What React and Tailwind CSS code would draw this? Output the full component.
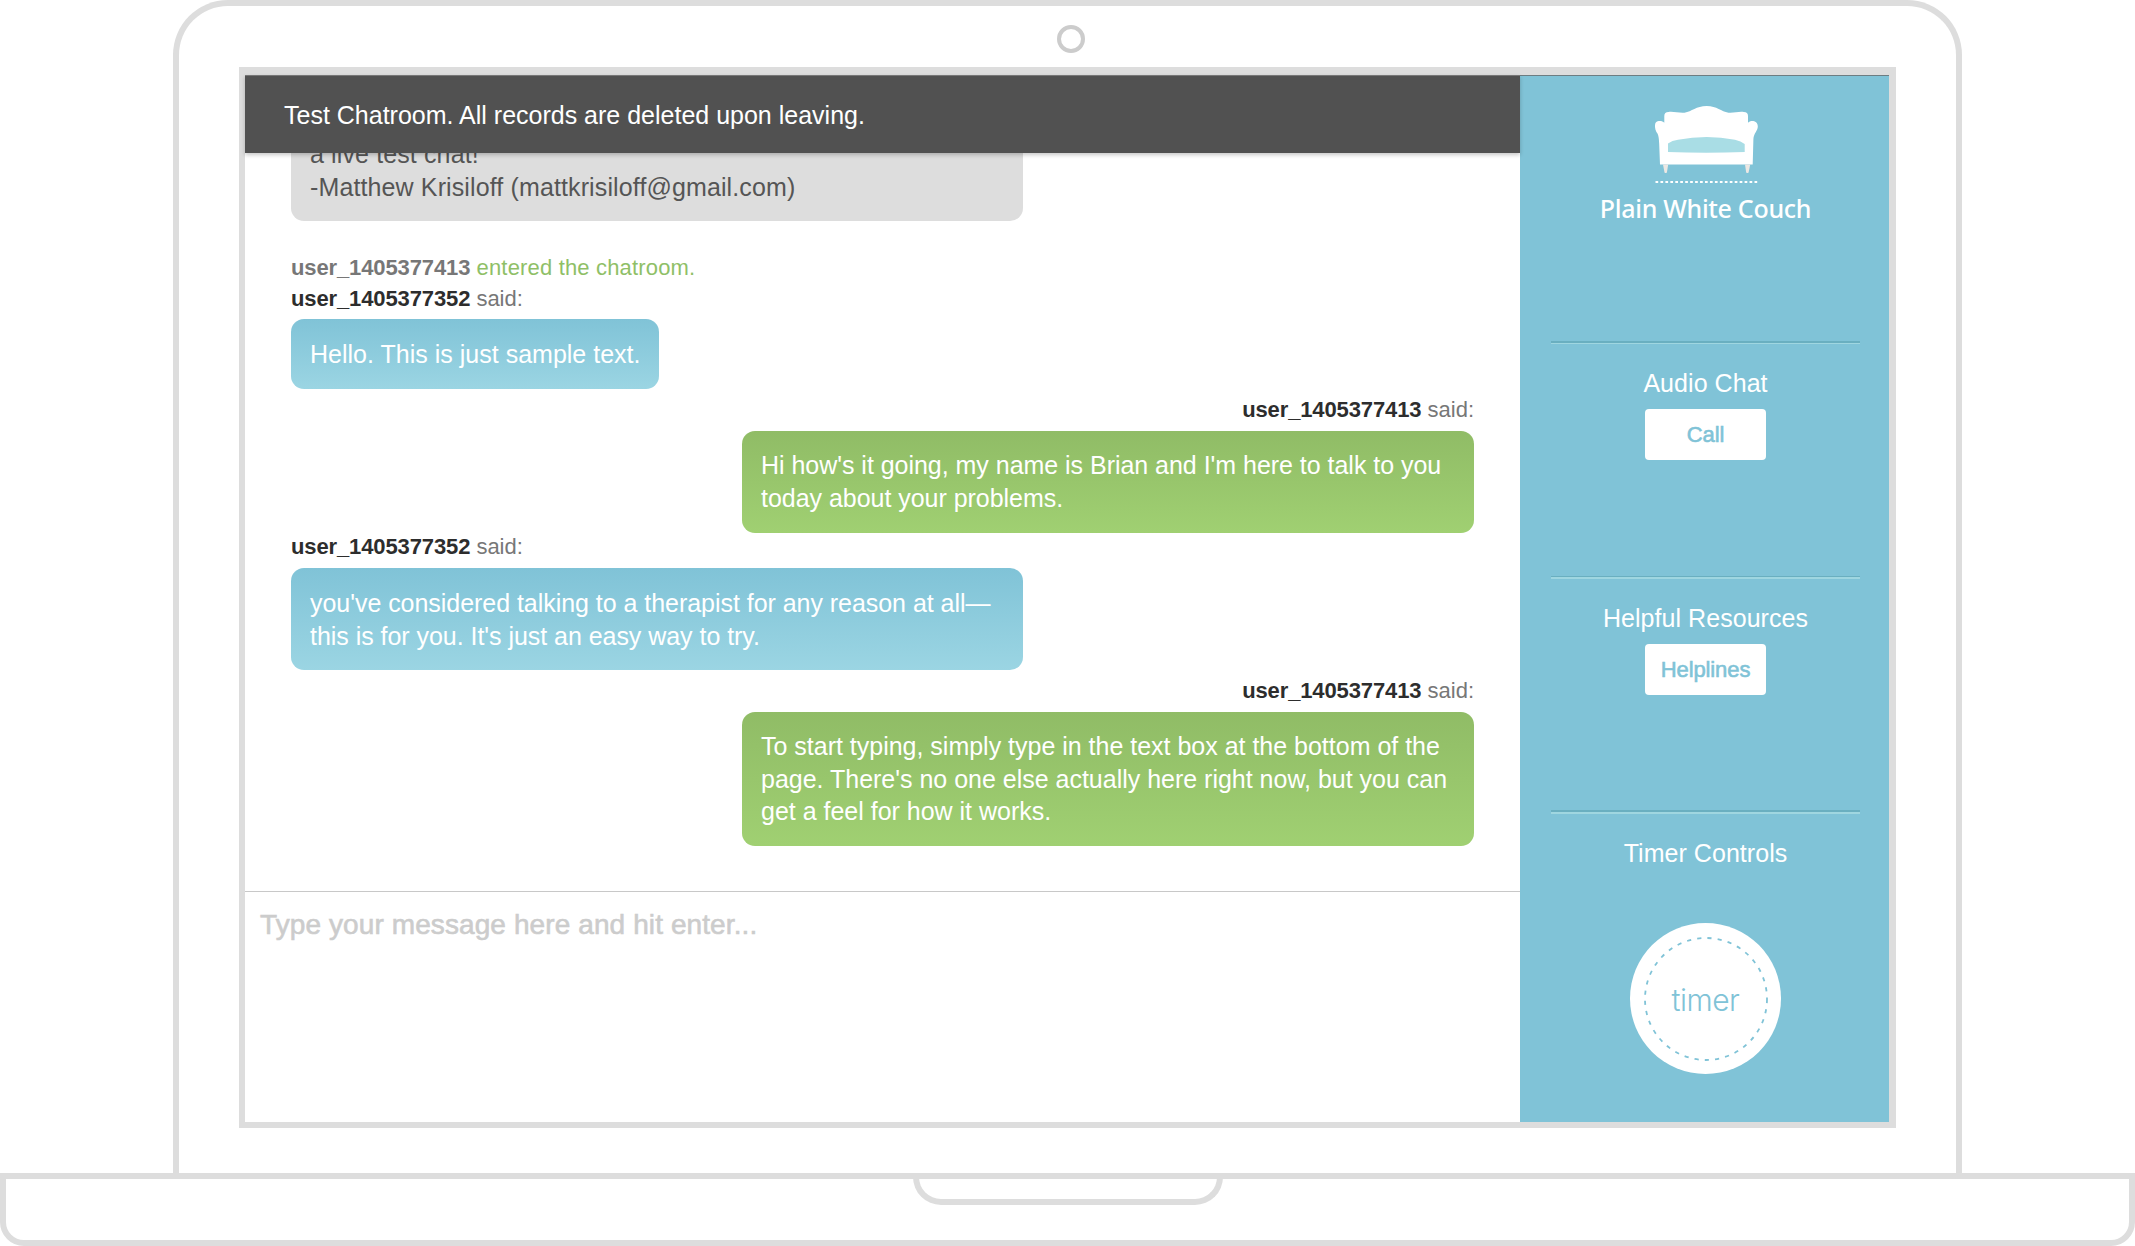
import React from "react";

const SELF = "user_1405377413";
const OTHER = "user_1405377352";

function Said({ name, className = "" }) {
  return (
    <p className={`text-[22px] leading-[28px] text-[#777] whitespace-nowrap ${className}`}>
      <b className="font-bold tracking-[-0.12px] text-[#2d2d2d]">{name}</b> said:
    </p>
  );
}

function Bubble({ lines, className }) {
  return (
    <div className={`rounded-[13px] pb-[18px] pl-[19px] text-[25px] leading-[32.5px] whitespace-nowrap ${className}`}>
      {lines.map((line) => (
        <p key={line}>{line}</p>
      ))}
    </div>
  );
}

const BLUE = "self-start bg-linear-to-b from-[#80c3d7] to-[#9bd5e3] pt-[19.5px] text-white";
const GREEN = "self-end w-[732px] bg-linear-to-b from-[#90bc66] to-[#a0d072] pt-[18.5px] text-white";

function Couch() {
  return (
    <svg width="103" height="78" viewBox="0 0 103 78" className="block">
      <path
        fill="#fff"
        d="M9.3 16.7V10Q9.3 6.2 13.5 6C18 5.2 24 7.2 29.5 6.7C37 5.5 41 0 51.7 0C62 0 66 5.5 73.5 6.7C79 7.2 84 5.2 88.8 6Q93 6.2 93 10V16.7C96 13.8 102.8 14.8 102.8 20.5C102.8 25 98.8 27 98.4 33L97.7 58.5H5L4.2 38C4 30 3 28 1.4 26C-.4 23 -.4 18 .8 16.5C3 14.2 7.5 14.7 9.3 16.7Z"
      />
      <path fill="#a9dde5" d="M13 37.5Q17 34.5 23 33.8Q37 31 51.7 31Q66 31 80 33.8Q86 35 89.7 38V46Q51 47.4 13 46Z" />
      <path fill="#ece8e4" d="M8 58.5h5.2l-1.3 8q-1.2 1-2.4 0zM90 58.5h5.2l-1.6 8q-1.2 1-2.4 0z" />
      <path stroke="#fff" strokeWidth="1.8" strokeDasharray="2.7 2.25" d="M.5 76H103" />
    </svg>
  );
}

function Divider({ className }) {
  return <div className={`ml-[2px] w-[309px] shrink-0 border-t-[#6aafc0] border-b-[#9fd6e0] ${className}`} />;
}

function PanelSection({ title, button, className = "" }) {
  return (
    <section className={`flex flex-col items-center ${className}`}>
      <h2 className="text-[25px] leading-[30px] tracking-[0.05px] text-white whitespace-nowrap">{title}</h2>
      {button && (
        <button className="mt-[11px] h-[51px] w-[121px] rounded-[4px] bg-white pt-px text-[22px] leading-[30px] tracking-[-0.1px] text-[#80c3d7] [-webkit-text-stroke:0.6px_#80c3d7]">
          {button}
        </button>
      )}
    </section>
  );
}

function Sidebar() {
  return (
    <aside className="flex w-[369px] shrink-0 flex-col items-center border-t border-t-[#6d7d82] bg-[#80c3d7]">
      <div className="mt-[30px] ml-[3px]">
        <Couch />
      </div>
      <h1 className="mt-[7px] ml-[2px] font-['Noto_Sans','Open_Sans',sans-serif] text-[25px] leading-[34px] font-medium tracking-[-0.3px] whitespace-nowrap text-white">
        Plain White Couch
      </h1>
      <Divider className="mt-[116px] border-t-2 border-b" />
      <PanelSection title="Audio Chat" button="Call" className="mt-[24px] ml-[2px] h-[208px]" />
      <Divider className="border-t border-b-2" />
      <PanelSection title="Helpful Resources" button="Helplines" className="mt-[24px] ml-[2px] h-[207px]" />
      <Divider className="border-t-2 border-b-2" />
      <PanelSection title="Timer Controls" className="mt-[24px] ml-[2px]" />
      <div className="mt-[55px] ml-[2px] grid size-[151px] place-items-center rounded-full bg-white">
        <svg width="124" height="124" className="col-start-1 row-start-1">
          <circle cx="62" cy="62" r="61" fill="none" stroke="#80c3d7" strokeWidth="1.8" strokeDasharray="4.2 6.1" />
        </svg>
        <span className="col-start-1 row-start-1 pt-[3px] font-['Inter',sans-serif] text-[30px] leading-[36px] font-light tracking-[-0.5px] text-[#80c3d7]">
          timer
        </span>
      </div>
    </aside>
  );
}

function ChatLog() {
  return (
    <div className="h-[738px] overflow-hidden px-[46px]">
      <div className="-mt-[34px] flex flex-col">
        <Bubble
          className="w-[732px] self-start bg-[#ddd] pt-[19px] tracking-[0.12px] text-[#555]"
          lines={["a live test chat!", "-Matthew Krisiloff (mattkrisiloff@gmail.com)"]}
        />
        <p className="mt-[32.5px] text-[22px] leading-[28px] tracking-[0.17px] text-[#8fbf67] whitespace-nowrap">
          <b className="font-bold tracking-[-0.12px] text-[#777]">{SELF}</b> entered the chatroom.
        </p>
        <Said name={OTHER} className="mt-[3px]" />
        <Bubble className={`mt-[6px] h-[70px] w-[368px] tracking-[0.01px] ${BLUE}`} lines={["Hello. This is just sample text."]} />
        <Said name={SELF} className="mt-[7px] self-end" />
        <Bubble
          className={`mt-[7px] h-[102px] tracking-[-0.03px] ${GREEN}`}
          lines={["Hi how's it going, my name is Brian and I'm here to talk to you", "today about your problems."]}
        />
        <Said name={OTHER} />
        <Bubble
          className={`mt-[7px] h-[102px] w-[732px] tracking-[-0.04px] ${BLUE}`}
          lines={["you've considered talking to a therapist for any reason at all—", "this is for you. It's just an easy way to try."]}
        />
        <Said name={SELF} className="mt-[7px] self-end" />
        <Bubble
          className={`mt-[7px] h-[134px] tracking-[-0.01px] ${GREEN}`}
          lines={[
            "To start typing, simply type in the text box at the bottom of the",
            "page. There's no one else actually here right now, but you can",
            "get a feel for how it works.",
          ]}
        />
      </div>
    </div>
  );
}

export default function App() {
  return (
    <div className="flex h-[1246px] w-[2135px] flex-col overflow-hidden bg-white font-['Liberation_Sans',Arial,sans-serif]">
      <div className="ml-[173px] flex h-[1173px] w-[1789px] flex-col rounded-t-[55px] border-x-[6px] border-t-[6px] border-[#ddd]">
        <div className="mt-[19px] ml-[878px] size-[28px] shrink-0 rounded-full border-[4px] border-[#ccc]" />
        <div className="mt-[14px] ml-[60px] flex h-[1061px] w-[1657px] shrink-0 border-t-[8px] border-r-[7px] border-b-[6px] border-l-[6px] border-[#ddd]">
          <main className="flex w-[1275px] flex-col">
            <header className="relative z-10 h-[78px] border-t border-t-[#777] bg-[#515151] pt-[24px] pl-[39px] text-[25px] leading-[30px] text-white shadow-[0_2px_4px_rgba(0,0,0,0.22)]">
              Test Chatroom. All records are deleted upon leaving.
            </header>
            <ChatLog />
            <div className="flex-1 border-t border-t-[#c8c8c8] pt-[17px] pl-[15px] text-[28px] leading-[32px] tracking-[0.1px] text-[#ccc] [-webkit-text-stroke:0.6px_#ccc]">
              Type your message here and hit enter...
            </div>
          </main>
          <Sidebar />
        </div>
      </div>
      <div className="h-[73px] rounded-b-[24px] border-[6px] border-[#ddd]">
        <div className="mx-auto -mt-[2px] h-[28px] w-[310px] rounded-b-[28px] border-x-[6px] border-b-[6px] border-[#ddd]" />
      </div>
    </div>
  );
}
